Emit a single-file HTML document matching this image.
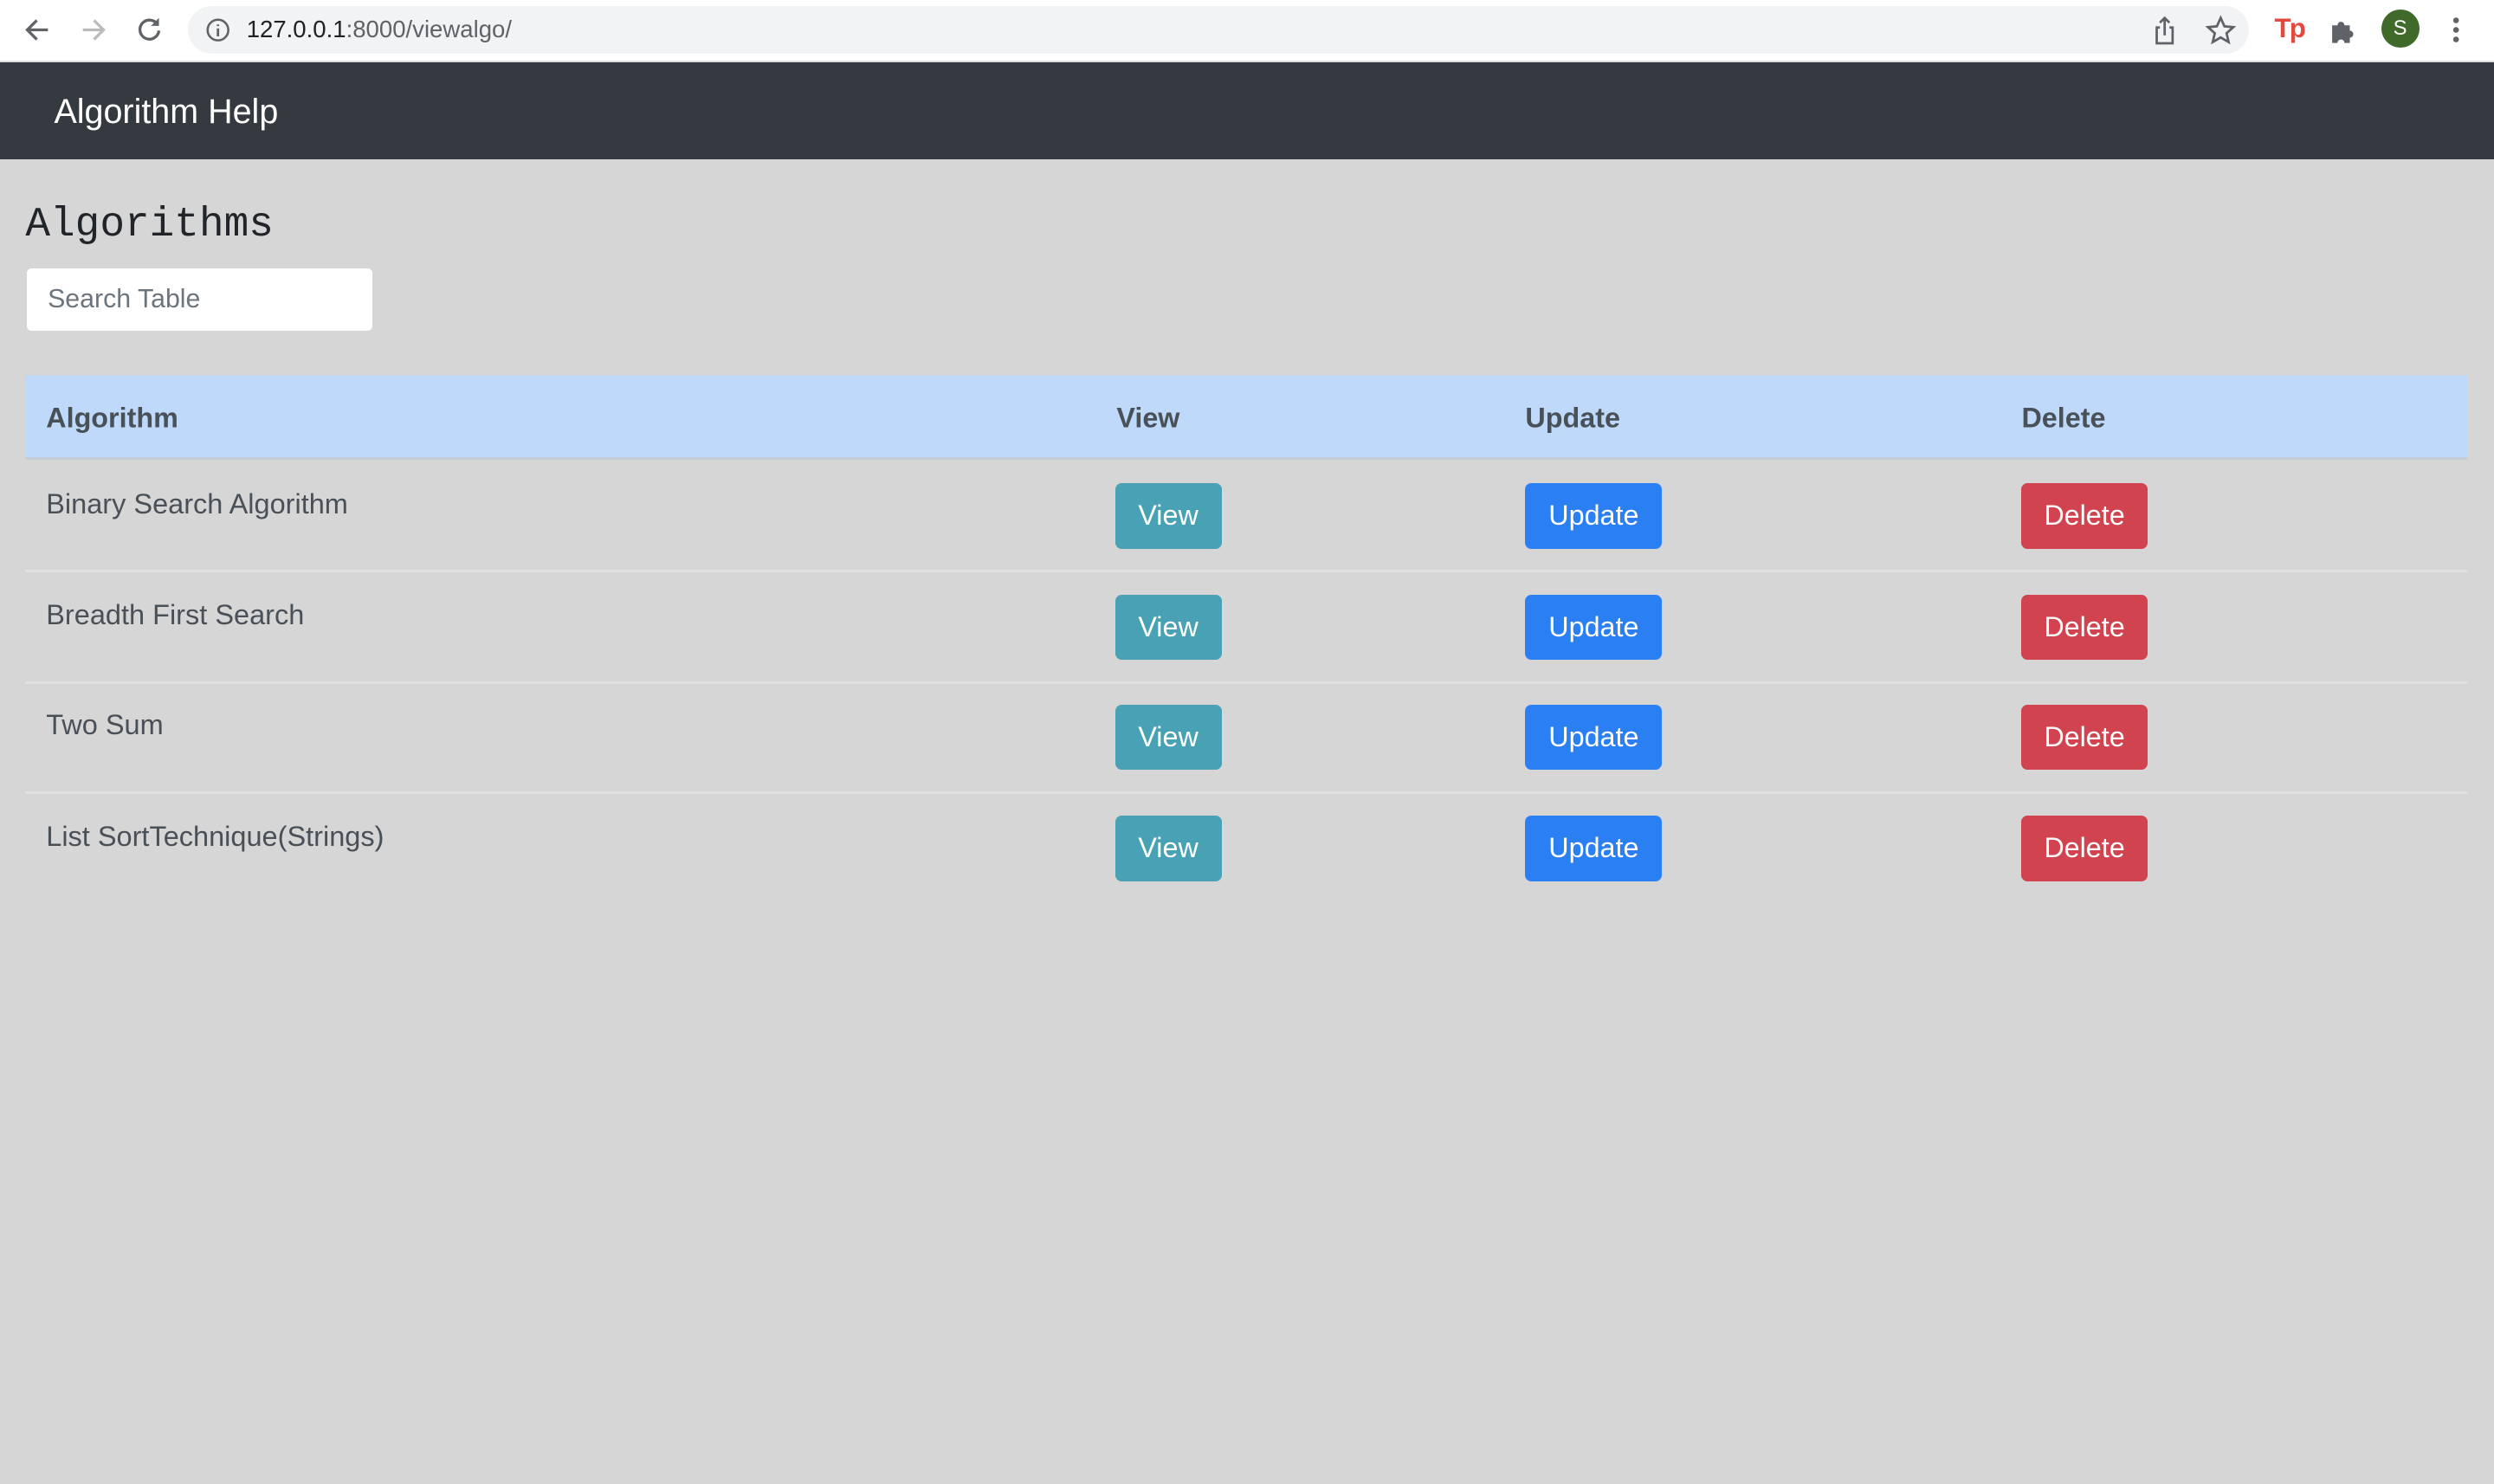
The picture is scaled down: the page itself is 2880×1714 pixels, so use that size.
<!DOCTYPE html>
<html><head><meta charset="utf-8"><style>
html,body{margin:0;padding:0;}
body{width:1568px;height:933px;zoom:1.83673;background:#d6d6d6;font-family:"Liberation Sans",sans-serif;position:relative;overflow:hidden;color:#495057}
.chrome{position:absolute;left:0;top:0;width:1568px;height:38px;background:#fff;border-bottom:1px solid #e3e3e3}
.pill{position:absolute;left:118px;top:4px;width:1296px;height:30px;border-radius:15px;background:#f1f3f4}
.url{position:absolute;left:155px;top:10px;font-size:15px;color:#5f6368}
.url b{font-weight:normal;color:#202124}
.nav{position:absolute;left:0;top:39px;width:1568px;height:61px;background:#343a40}
.nav span{position:absolute;left:34px;top:19px;color:#fff;font-size:21.5px}
h1{position:absolute;left:16px;top:127px;margin:0;font:26px "Liberation Mono",monospace;color:#212529;font-weight:normal}
.search{position:absolute;left:17px;top:169px;width:217px;height:39px;background:#fff;border-radius:3px;box-sizing:border-box;padding:10px 13px;font-size:16.5px;color:#6c757d}
.thead{position:absolute;left:16px;top:236px;width:1535px;height:53px;background:#bed9fa;border-top:1px solid #c8d3df;border-bottom:2px solid #c4cdd8;box-sizing:border-box}
.th{position:absolute;top:263px;font-size:17.6px;font-weight:bold;transform:translateY(-50%)}
.row{position:absolute;left:16px;width:1535px;height:70px;border-bottom:2px solid #e1e1e1;box-sizing:border-box}
.row .n{position:absolute;left:13px;top:17px;font-size:17.7px;color:#495057}
.btn{position:absolute;top:14px;height:41px;border-radius:4px;color:#fff;font-size:17.6px;display:flex;align-items:center;justify-content:center}
.v{left:685px;width:67px;background:#48a1b4}
.u{left:943px;width:86px;background:#2a7ff2}
.d{left:1255px;width:79px;background:#d1434f}
</style></head><body>
<div class="chrome">
<svg style="position:absolute;left:14px;top:10px" width="18" height="18" viewBox="0 0 18 18"><path d="M16 9H3M9 3L3 9l6 6" stroke="#5f6368" stroke-width="1.8" fill="none"/></svg>
<svg style="position:absolute;left:50px;top:10px" width="18" height="18" viewBox="0 0 18 18"><path d="M2 9h13M9 3l6 6-6 6" stroke="#bbb" stroke-width="1.8" fill="none"/></svg>
<svg style="position:absolute;left:85px;top:9px" width="18" height="18" viewBox="0 0 18 18"><path d="M14 6A6 6 0 1 0 15 10" stroke="#5f6368" stroke-width="1.8" fill="none"/><path d="M15 2v5h-5z" fill="#5f6368"/></svg>
<div class="pill"></div>
<svg style="position:absolute;left:129px;top:11px" width="16" height="16" viewBox="0 0 16 16"><circle cx="8" cy="8" r="6.5" stroke="#5f6368" stroke-width="1.4" fill="none"/><path d="M8 7v5M8 4.5v1" stroke="#5f6368" stroke-width="1.5"/></svg>
<div class="url"><b>127.0.0.1</b>:8000/viewalgo/</div>
<svg style="position:absolute;left:1353px;top:9px" width="16" height="20" viewBox="0 0 16 20"><path d="M5 8H3v10h10V8h-2M8 13V2M5 5l3-3 3 3" stroke="#5f6368" stroke-width="1.5" fill="none"/></svg>
<svg style="position:absolute;left:1386px;top:9px" width="20" height="20" viewBox="0 0 20 20"><path d="M10 2l2.4 5.3 5.6.5-4.3 3.8 1.3 5.6L10 14.3 5 17.2l1.3-5.6L2 7.8l5.6-.5z" stroke="#5f6368" stroke-width="1.5" fill="none"/></svg>
<div style="position:absolute;left:1430px;top:8px;color:#e5483c;font-weight:bold;font-size:17px;letter-spacing:-1px">Tp</div>
<svg style="position:absolute;left:1464px;top:9px" width="20" height="20" viewBox="0 0 18 18"><path d="M2 6h3a2 2 0 1 1 4 0h3v3a2 2 0 1 1 0 4v3H9a2 2 0 1 0-4 0H2z" fill="#5f6368"/></svg>
<div style="position:absolute;left:1497px;top:6px;width:24px;height:24px;border-radius:50%;background:#3f6a2a;color:#fff;font-size:13px;text-align:center;line-height:24px">S</div>
<svg style="position:absolute;left:1539px;top:10px" width="10" height="18"><circle cx="5" cy="3" r="1.8" fill="#5f6368"/><circle cx="5" cy="9" r="1.8" fill="#5f6368"/><circle cx="5" cy="15" r="1.8" fill="#5f6368"/></svg>
</div>
<div class="nav"><span>Algorithm Help</span></div>
<h1>Algorithms</h1>
<div class="search">Search Table</div>
<div class="thead"></div>
<div class="th" style="left:29px">Algorithm</div>
<div class="th" style="left:702px">View</div>
<div class="th" style="left:959px">Update</div>
<div class="th" style="left:1271px">Delete</div>
<div class="row" style="top:290px"><div class="n">Binary Search Algorithm</div><div class="btn v">View</div><div class="btn u">Update</div><div class="btn d">Delete</div></div>
<div class="row" style="top:360px"><div class="n">Breadth First Search</div><div class="btn v">View</div><div class="btn u">Update</div><div class="btn d">Delete</div></div>
<div class="row" style="top:429px"><div class="n">Two Sum</div><div class="btn v">View</div><div class="btn u">Update</div><div class="btn d">Delete</div></div>
<div class="row" style="top:499px;border-bottom:none"><div class="n">List SortTechnique(Strings)</div><div class="btn v">View</div><div class="btn u">Update</div><div class="btn d">Delete</div></div>
</body></html>
